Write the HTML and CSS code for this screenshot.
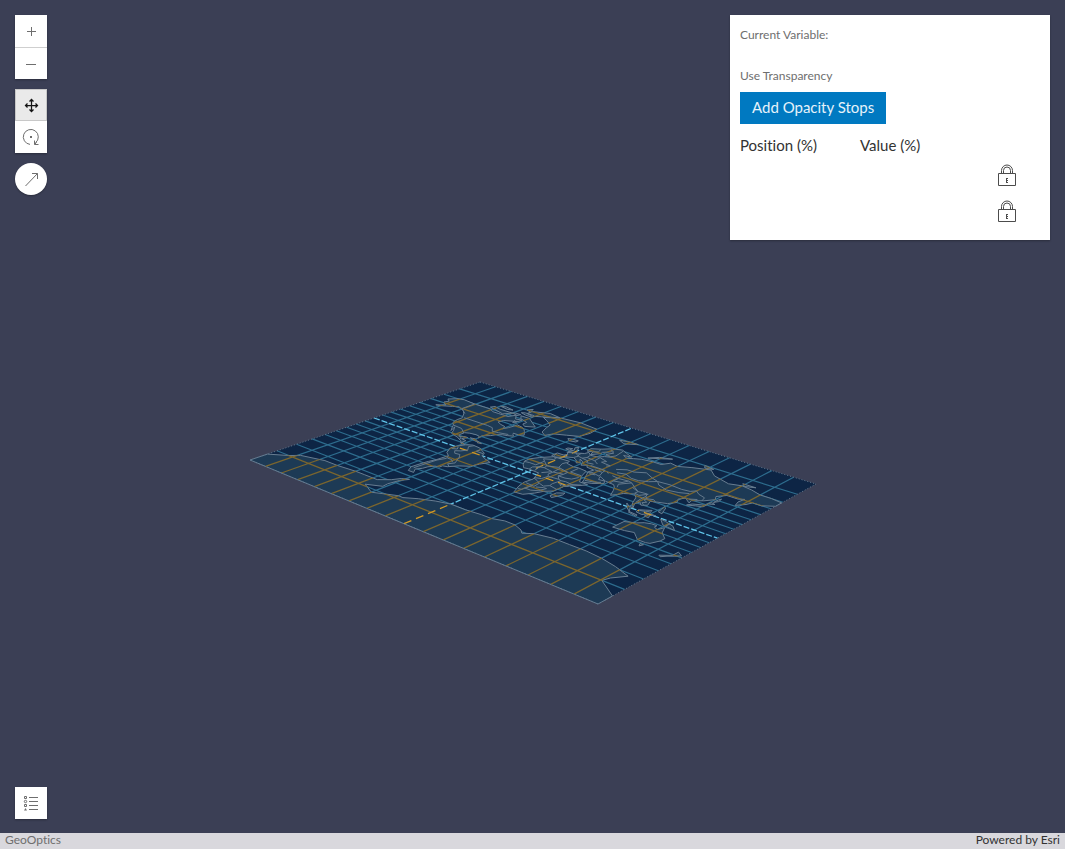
FILE: index.html
```html
<!DOCTYPE html>
<html lang="en">
<head>
<meta charset="utf-8">
<title>GeoOptics</title>
<link rel="stylesheet" href="styles.css">
</head>
<body>
<main class="view">
  <svg class="scene" id="scene" viewBox="0 0 1065 833" role="img" aria-label="World map"></svg>
  <div class="overlay">
    <div class="tools">
      <div class="group">
        <button class="tool" type="button" aria-label="Zoom in"><svg width="16" height="16" viewBox="0 0 16 16"><path d="M4 8.500h9M8.500 4v9"/></svg></button>
        <button class="tool tool-divided" type="button" aria-label="Zoom out"><svg width="16" height="16" viewBox="0 0 16 16"><path d="M3 8.500h10"/></svg></button>
      </div>
      <div class="group">
        <button class="tool tool-active" type="button" aria-label="Pan"><svg width="16" height="16" viewBox="0 0 16 16"><path d="M2.500 8.500h12M8.500 2.500v12M6.500 4.500l2-2 2 2M6.500 12.500l2 2 2-2M4.500 6.500l-2 2 2 2M12.500 6.500l2 2-2 2"/></svg></button>
        <button class="tool" type="button" aria-label="Rotate"><svg width="18" height="18" viewBox="0 0 18 18"><path d="M8 16.400A7.500 7.500 0 1 1 13.500 14.800M12.500 12.500v4h4M12.700 16.300l2-2"/><path class="solid" d="M8 8h2v2H8z"/></svg></button>
      </div>
      <button class="tool tool-round" type="button" aria-label="Compass"><svg width="16" height="16" viewBox="0 0 16 16"><path d="M2.500 15L14.500 2.500M9 2.500H14.500V8"/></svg></button>
    </div>
    <section class="panel">
      <p class="label">Current Variable:</p>
      <p class="label label-second">Use Transparency</p>
      <button class="action" type="button">Add Opacity Stops</button>
      <div class="stops">
        <span>Position (%)</span><span>Value (%)</span><span></span>
      </div>
      <div class="lock-row"><button class="lock" type="button" aria-label="Lock first stop"><svg width="20" height="24" viewBox="0 0 20 24"><path d="M1.500 9.500h17v12h-17zM4.500 9V6.500a5.500 5.500 0 0 1 11 0V9M6.500 9V6.500a3.500 3.500 0 0 1 7 0V9"/><path class="solid" d="M9 14h2v1H9zM9 15h1v3H9zM10 16h1v1h-1zM9 18h2v1H9z"/></svg></button></div>
      <div class="lock-row"><button class="lock" type="button" aria-label="Lock second stop"><svg width="20" height="24" viewBox="0 0 20 24"><path d="M1.500 9.500h17v12h-17zM4.500 9V6.500a5.500 5.500 0 0 1 11 0V9M6.500 9V6.500a3.500 3.500 0 0 1 7 0V9"/><path class="solid" d="M9 14h2v1H9zM9 15h1v3H9zM10 16h1v1h-1zM9 18h2v1H9z"/></svg></button></div>
    </section>
    <button class="tool legend" type="button" aria-label="Legend"><svg width="16" height="16" viewBox="0 0 16 16"><path d="M6 2.500h9M6 6.500h9M6 10.500h9M6 14.500h9M1.500 1.500h2v2h-2zM1.500 9.500h2v2h-2z"/><circle cx="2.500" cy="6.500" r="1.200"/><path class="solid" d="M1 15.500L2.500 13 4 15.500z"/></svg></button>
  </div>
</main>
<footer class="attribution"><span>GeoOptics</span><span>Powered by Esri</span></footer>
<script src="map.js"></script>
</body>
</html>
```
FILE: styles.css
```css
* { box-sizing: border-box; }
body {
  margin: 0;
  min-height: 100vh;
  display: flex;
  flex-direction: column;
  background: #3b3f55;
  font-family: Lato, "Open Sans", sans-serif;
  font-size: 15px;
  line-height: 20px;
  font-variant-ligatures: none;
  color: #323232;
}
button { font: inherit; border: 0; padding: 0; cursor: pointer; }
p { margin: 0; }
.view { flex: 1; position: relative; display: flex; }
.scene { position: absolute; width: 100%; height: 100%; }
.overlay {
  position: relative;
  flex: 1;
  display: grid;
  grid-template-columns: 1fr 320px;
  grid-template-rows: 1fr auto;
  align-items: start;
  padding: 15px 15px 14px;
}
.tools { display: flex; flex-direction: column; gap: 10px; width: 32px; }
.group { box-shadow: 0 1px 2px rgba(0, 0, 0, .3); }
.tool {
  display: flex;
  align-items: center;
  justify-content: center;
  width: 32px;
  height: 32px;
  background: #fff;
  color: #6e6e6e;
}
.tool svg, .lock svg { fill: none; stroke: currentColor; stroke-width: 1; }
.tool .solid, .lock .solid { fill: currentColor; stroke: none; }
.tool-divided { border-top: 1px solid #cfcfcf; }
.tool-active { background: #eaeaea; border: 1px solid #c8c8c8; color: #151515; }
.tool-active svg { stroke-width: 1.25; }
.tool-round { border-radius: 50%; box-shadow: 0 1px 2px rgba(0, 0, 0, .3); }
.legend { grid-row: 2; box-shadow: 0 1px 2px rgba(0, 0, 0, .3); }
.panel { background: #fff; padding: 10px 10px 4px; box-shadow: 0 1px 2px rgba(0, 0, 0, .3); }
.label { font-size: 12px; color: #6e6e6e; }
.label-second { margin: 21px 0 6px; }
.action { display: block; height: 32px; padding: 0 12px 2px; background: #0079c1; color: #e6f2fa; }
.stops { display: grid; grid-template-columns: 120px 120px 1fr; margin: 11px 0 9px; }
.lock-row { display: flex; justify-content: flex-end; height: 36px; padding-right: 23px; }
.lock { width: 20px; height: 24px; background: none; color: #4c4c4c; }
.attribution {
  display: flex;
  justify-content: space-between;
  padding: 0 5px 2px;
  background: #d9d8dd;
  font-size: 12px;
  line-height: 14px;
}
.attribution span:first-child { color: #6e6e6e; }
.ocean { fill: #0d2545; }
.grid { fill: none; stroke: #2d6c8d; stroke-width: 1.2; }
.axis { fill: none; stroke: #5fc3e8; stroke-width: 1.3; stroke-dasharray: 6 2; }
.land { fill: #1d3a55; stroke: #687d91; stroke-width: 1; }
.border { fill: none; stroke: #64798c; stroke-width: 1; }
.land-grid { fill: none; stroke: #7a652e; stroke-width: 1.3; }
.land-axis { fill: none; stroke: #d09827; stroke-width: 1.3; stroke-dasharray: 8 5; }
.edge { fill: none; stroke: #5f788f; stroke-width: 1; stroke-dasharray: 1 2; }
```
FILE: map.js
```js
const NS = 'http://www.w3.org/2000/svg';
const scene = document.getElementById('scene');
// Corners of the tilted map plane: NW, NE, SE, SW.
const Q = [[480, 382], [816, 484], [598, 604], [250, 460]];
const dx1 = Q[1][0] - Q[2][0], dx2 = Q[3][0] - Q[2][0], dx3 = Q[0][0] - Q[1][0] + Q[2][0] - Q[3][0];
const dy1 = Q[1][1] - Q[2][1], dy2 = Q[3][1] - Q[2][1], dy3 = Q[0][1] - Q[1][1] + Q[2][1] - Q[3][1];
const det = dx1 * dy2 - dx2 * dy1;
const g = (dx3 * dy2 - dx2 * dy3) / det, h = (dx1 * dy3 - dx3 * dy1) / det;

// Miller cylindrical latitude
const miller = lat => 1.25 * Math.log(Math.tan(Math.PI / 4 + 0.4 * lat * Math.PI / 180));

function project(lon, lat) {
  const u = (lon + 180) / 360;
  const v = (1 - miller(lat) / miller(90)) / 2;
  const w = g * u + h * v + 1;
  return [
    ((Q[1][0] - Q[0][0] + g * Q[1][0]) * u + (Q[3][0] - Q[0][0] + h * Q[3][0]) * v + Q[0][0]) / w,
    ((Q[1][1] - Q[0][1] + g * Q[1][1]) * u + (Q[3][1] - Q[0][1] + h * Q[3][1]) * v + Q[0][1]) / w
  ];
}
function path(points, close) {
  return 'M' + points.map(p => project(p[0], p[1]).map(n => n.toFixed(1)).join(' ')).join('L') + (close ? 'Z' : '');
}
function add(d, cls, parent = scene) {
  const el = document.createElementNS(NS, 'path');
  el.setAttribute('d', d);
  el.setAttribute('class', cls);
  parent.appendChild(el);
  return el;
}
const parse = s => s.trim().split(/\s+/).map(p => p.split(',').map(Number));

const lands = [
  // North and Central America
  '-168,66 -162,70 -156,71 -141,70 -128,70 -122,70 -115,68 -108,68 -97,68 -94,72 -88,68 -82,69 -82,66 -93,62 -94,58 -88,56 -82,55 -80,51 -78,55 -77,60 -77,62 -70,61 -65,59 -62,57 -56,52 -60,50 -66,50 -64,48 -61,46 -66,44 -70,43 -74,40 -76,36 -81,31 -80,26 -82,29 -86,30 -93,29 -97,27 -97,21 -94,18 -90,21 -87,21 -89,16 -83,15 -83,10 -79,9 -77,8 -82,8 -86,12 -94,16 -104,19 -108,25 -113,31 -109,23 -114,29 -117,33 -122,37 -124,43 -124,48 -130,54 -136,58 -146,61 -151,59 -160,55 -165,54 -158,58 -165,61 -163,64',
  // Caribbean
  '-85,22 -80,23 -74,20 -78,20', '-74,20 -69,19 -73,18',
  // South America
  '-77,8 -72,12 -63,11 -52,5 -50,0 -44,-3 -35,-6 -39,-14 -41,-22 -48,-27 -54,-34 -58,-35 -58,-38 -62,-39 -65,-43 -66,-47 -69,-51 -65,-55 -71,-55 -75,-50 -74,-42 -73,-36 -71,-30 -70,-18 -76,-14 -81,-5 -80,1',
  // Greenland
  '-73,78 -60,82 -40,83 -20,82 -18,77 -20,71 -30,68 -40,65 -43,60 -50,63 -54,69 -56,73 -65,76',
  // Arctic islands
  '-125,72 -118,71 -105,69 -100,73 -115,73 -123,74', '-120,76 -110,75 -105,76 -115,77',
  '-100,73 -93,72 -92,74 -98,74', '-95,76 -88,75 -80,75 -82,77 -92,77', '-96,80 -90,79 -93,82',
  '-90,80 -75,83 -62,82 -75,78 -82,76 -90,77',
  '-90,73 -80,73 -72,70 -62,66 -70,63 -75,65 -75,68 -85,70', '-86,66 -81,64 -84,63',
  '-24,65 -20,66 -14,66 -14,64 -20,63',
  '10,79 20,80 28,80 18,77',
  '52,71 58,75 68,77 60,74',
  '95,80 105,79 98,78',
  '138,75 150,75 142,73',
  // Europe and Asia
  '-9,43 -9,37 -5,36 0,39 3,42 7,44 12,42 16,38 18,40 13,45 19,42 22,37 26,40 28,37 36,36 35,31 43,17 45,13 52,16 59,22 56,26 51,25 48,30 57,26 66,25 70,21 73,16 77,8 80,13 82,17 89,22 94,17 98,8 103,1 104,1 100,8 101,13 105,9 109,12 106,19 110,21 118,24 122,30 119,35 122,40 126,37 129,35 128,39 135,44 140,50 137,54 142,59 152,59 156,61 155,56 157,51 162,56 164,60 172,60 180,64 180,69 170,70 160,70 150,72 140,73 130,71 113,74 104,78 90,75 80,72 72,73 68,69 60,69 50,68 44,66 40,64 34,66 41,67 33,69 26,71 18,69 12,65 5,62 6,58 11,59 13,55 18,60 17,62 22,66 25,65 22,61 30,60 24,58 21,55 14,54 9,57 8,54 2,51 -4,48 -1,46 -2,43',
  '-5,50 1,51 1,53 -2,56 -4,59 -6,57 -3,54',
  '-10,52 -6,52 -6,55 -10,54',
  // Africa
  '-6,36 10,37 11,33 20,31 24,32 33,31 37,21 43,12 51,12 49,8 40,-3 40,-15 35,-20 32,-27 27,-34 19,-35 14,-25 12,-17 13,-8 9,1 8,4 -4,5 -8,4 -13,9 -17,15 -17,21 -13,28',
  '44,-16 49,-12 50,-16 47,-25 44,-23',
  // Southeast Asia and Oceania
  '95,5 102,0 106,-6 101,-2',
  '109,1 113,4 117,7 119,1 116,-4 110,-3',
  '119,1 125,1 121,-1 123,-5 119,-5',
  '106,-6 114,-7 114,-9 106,-7',
  '120,18 122,17 124,12 126,7 122,8 121,13',
  '131,-1 136,-2 145,-5 150,-10 143,-9 138,-8',
  '130,31 136,34 141,36 141,42 145,44 141,45 140,39 132,35',
  '143,53 144,49 142,46 142,51',
  '114,-22 114,-34 124,-33 131,-31 136,-35 140,-38 147,-38 150,-37 153,-30 153,-25 146,-19 142,-11 140,-17 136,-15 136,-12 131,-12 126,-14 122,-18',
  '145,-41 148,-41 147,-44',
  '173,-35 178,-38 175,-41 171,-44 168,-47 166,-46 173,-41',
  // Antarctica
  '-180,-90 -180,-84 -165,-80 -158,-77 -150,-76 -135,-74 -120,-74 -100,-73 -90,-73 -75,-73 -67,-69 -63,-65 -57,-63 -61,-67 -63,-73 -62,-76 -75,-79 -60,-82 -40,-78 -35,-78 -25,-75 -12,-72 0,-70 15,-70 30,-69 40,-69 50,-67 60,-67 69,-69 73,-71 80,-68 95,-66 110,-66 125,-66 140,-67 155,-69 170,-72 163,-77 161,-80 180,-85 180,-90'
].map(parse);

const borders = [
  '-141,70 -141,60 -130,55', '-123,49 -95,49 -88,48 -82,43 -76,44 -67,46', '-117,33 -106,32 -97,26',
  '-92,18 -89,14', '-84,11 -82,9', '-70,12 -72,7 -67,1 -70,-4 -74,-7 -70,-11 -65,-10 -60,-16 -58,-20 -55,-25 -58,-30 -53,-33',
  '-78,1 -75,-3 -79,-5', '-70,-18 -67,-23 -70,-30 -71,-40 -72,-50', '-67,-22 -62,-22 -58,-25', '-60,8 -60,4 -52,4',
  '-2,35 -2,32 -9,28 -5,25 3,19 12,23 9,30 10,34', '25,31 25,22 36,22', '12,23 24,20 24,15 15,13 14,22',
  '-5,25 -5,15 -12,15 -17,14', '3,19 4,15 0,14 -4,10 -3,5', '4,15 14,13 9,6', '0,14 2,6',
  '24,15 23,10 30,10 35,12 37,18', '23,10 28,5 31,4 35,5 42,4 48,8', '15,13 15,7 18,4 28,5',
  '18,4 17,-3 12,-5', '31,4 30,-5 31,-9 28,-13 22,-11 17,-8 12,-6', '42,4 41,-2 34,-1 38,-4',
  '31,-9 40,-11', '22,-11 23,-18 14,-17', '21,-18 20,-28 17,-29', '20,-25 26,-25 31,-22 33,-15 30,-15 25,-18',
  '-9,42 -7,37', '-2,43 3,42', '2,51 8,48 7,44', '8,48 13,47 15,50 14,54', '6,53 6,50 8,48', '15,50 24,49 23,55',
  '13,47 20,46 22,43 28,44', '24,49 30,46', '23,55 32,53 30,50 40,49 38,47', '28,70 30,63 28,60',
  '12,65 14,61 11,59', '18,68 24,66', '28,41 43,41 44,37 36,37', '44,37 47,30 38,32 35,30', '46,40 49,38',
  '62,25 61,30 61,36 54,37', '61,36 70,37 74,36 68,28 71,23', '48,47 55,51 62,51 70,55 80,51 87,49 82,45 75,42 68,42 60,45 53,43',
  '61,30 68,32 70,37', '87,49 98,50 110,49 117,50 120,53 125,50 132,48 134,43', '87,49 92,45 102,42 112,44 119,47',
  '74,36 80,32 88,27 96,28 98,24 101,21 106,23 109,21', '88,27 88,23 93,22 97,28', '80,30 88,27',
  '98,24 98,18 99,11', '101,21 101,18 105,16 103,13 106,11', '125,40 130,43', '38,29 43,30', '44,17 52,19 56,22',
  '110,1 115,2 117,4', '141,-3 141,-9', '102,1 100,3'
].map(parse);

const meridians = [], parallels = [];
for (let lon = -160; lon < 180; lon += 20) if (lon) meridians.push([[lon, -90], [lon, 90]]);
for (let lat = -80; lat <= 80; lat += 10) if (lat) parallels.push([[-180, lat], [180, lat]]);
const grid = meridians.concat(parallels).map(l => path(l)).join('');
const landGrid = meridians.concat(parallels.filter(l => l[0][1] % 20 === 0)).map(l => path(l)).join('');
const axes = path([[-180, 0], [180, 0]]) + path([[0, -90], [0, 90]]);
const outline = path([[-180, 90], [180, 90], [180, -90], [-180, -90]], true);
const land = lands.map(l => path(l, true)).join('');

add(outline, 'ocean');
add(grid, 'grid');
add(axes, 'axis');
add(land, 'land');
const defs = document.createElementNS(NS, 'defs');
const clip = document.createElementNS(NS, 'clipPath');
clip.id = 'land-clip';
defs.appendChild(clip);
scene.appendChild(defs);
add(land, '', clip);
const inner = document.createElementNS(NS, 'g');
inner.setAttribute('clip-path', 'url(#land-clip)');
scene.appendChild(inner);
add(landGrid, 'land-grid', inner);
add(axes, 'land-axis', inner);
add(borders.map(l => path(l)).join(''), 'border');
add(outline, 'edge');
```
